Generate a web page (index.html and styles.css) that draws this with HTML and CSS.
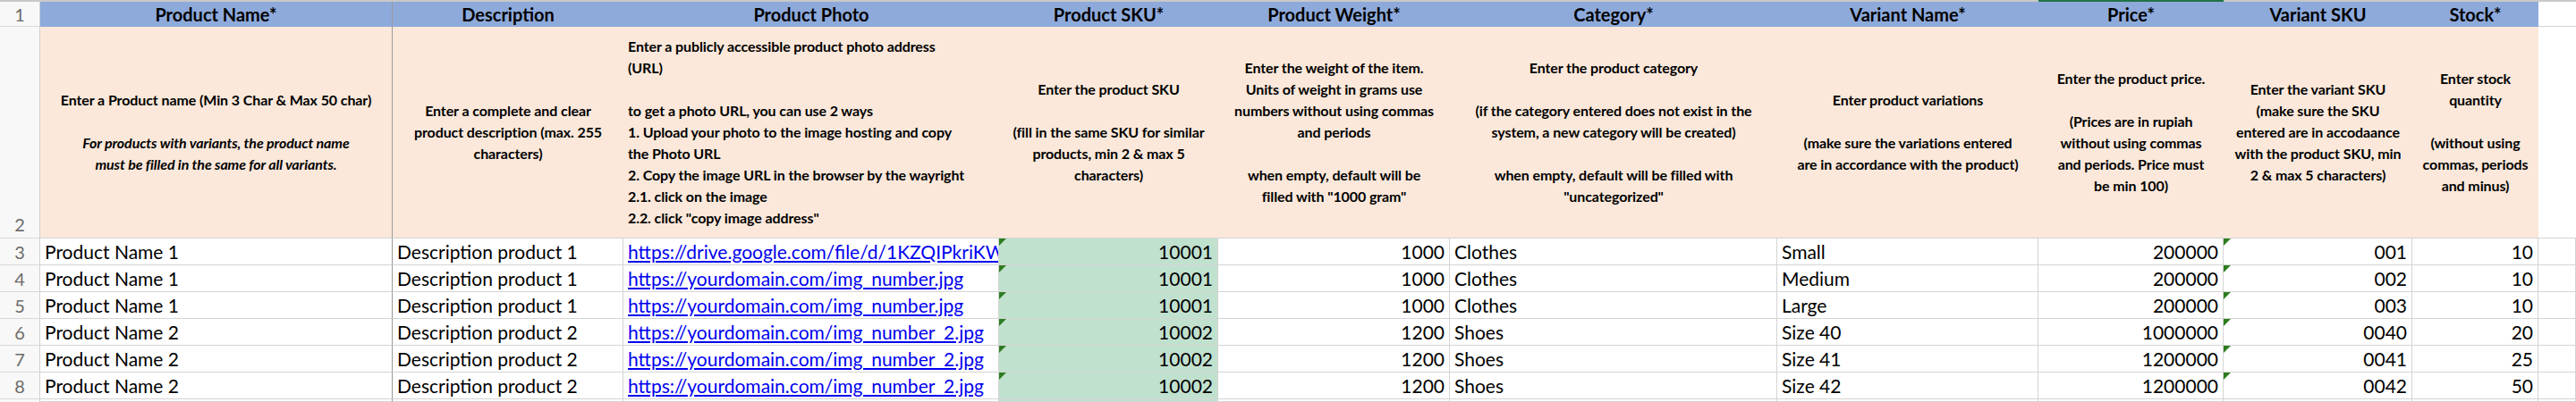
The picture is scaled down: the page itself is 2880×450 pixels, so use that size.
FILE: index.html
```html
<!DOCTYPE html>
<html lang="en">
<head>
<meta charset="utf-8">
<title>Product import template</title>
<link rel="stylesheet" href="styles.css">
</head>
<body>
<div class="sheet">
  <!-- column letter strip (cropped) -->
  <div class="strip"></div><div class="strip"></div><div class="strip"></div><div class="strip"></div>
  <div class="strip"></div><div class="strip"></div><div class="strip"></div><div class="strip"></div>
  <div class="strip sel"></div><div class="strip"></div><div class="strip"></div><div class="strip"></div>

  <!-- row 1 -->
  <div class="rh mid">1</div>
  <div class="hd name">Product Name*</div>
  <div class="hd">Description</div>
  <div class="hd">Product Photo</div>
  <div class="hd">Product SKU*</div>
  <div class="hd">Product Weight*</div>
  <div class="hd">Category*</div>
  <div class="hd">Variant Name*</div>
  <div class="hd">Price*</div>
  <div class="hd">Variant SKU</div>
  <div class="hd">Stock*</div>
  <div class="empty"></div>

  <!-- row 2 -->
  <div class="rh">2</div>
  <div class="ins name"><div class="txt">Enter a Product name (Min 3 Char &amp; Max 50 char)<br><br><em>For products with variants, the product name<br>must be filled in the same for all variants.</em></div></div>
  <div class="ins"><div class="txt">Enter a complete and clear<br>product description (max. 255<br>characters)</div></div>
  <div class="ins left"><div class="txt">Enter a publicly accessible product photo address<br>(URL)<br><br>to get a photo URL, you can use 2 ways<br>1. Upload your photo to the image hosting and copy<br>the Photo URL<br>2. Copy the image URL in the browser by the wayright<br>2.1. click on the image<br>2.2. click "copy image address"</div></div>
  <div class="ins"><div class="txt">Enter the product SKU<br><br>(fill in the same SKU for similar<br>products, min 2 &amp; max 5<br>characters)</div></div>
  <div class="ins"><div class="txt">Enter the weight of the item.<br>Units of weight in grams use<br>numbers without using commas<br>and periods<br><br>when empty, default will be<br>filled with "1000 gram"</div></div>
  <div class="ins"><div class="txt">Enter the product category<br><br>(if the category entered does not exist in the<br>system, a new category will be created)<br><br>when empty, default will be filled with<br>"uncategorized"</div></div>
  <div class="ins"><div class="txt">Enter product variations<br><br>(make sure the variations entered<br>are in accordance with the product)</div></div>
  <div class="ins"><div class="txt">Enter the product price.<br><br>(Prices are in rupiah<br>without using commas<br>and periods. Price must<br>be min 100)</div></div>
  <div class="ins"><div class="txt">Enter the variant SKU<br>(make sure the SKU<br>entered are in accodaance<br>with the product SKU, min<br>2 &amp; max 5 characters)</div></div>
  <div class="ins"><div class="txt">Enter stock<br>quantity<br><br>(without using<br>commas, periods<br>and minus)</div></div>
  <div class="empty"></div>

  <!-- data rows -->
  <div class="rh mid">3</div>
  <div class="td name">Product Name 1</div>
  <div class="td">Description product 1</div>
  <div class="td"><span class="link">https://drive.google.com/file/d/1KZQIPkriKW</span></div>
  <div class="td num sku flag">10001</div>
  <div class="td num">1000</div>
  <div class="td">Clothes</div>
  <div class="td">Small</div>
  <div class="td num">200000</div>
  <div class="td num flag">001</div>
  <div class="td num">10</div>
  <div class="td"></div>

  <div class="rh mid">4</div>
  <div class="td name">Product Name 1</div>
  <div class="td">Description product 1</div>
  <div class="td"><span class="link">https://yourdomain.com/img_number.jpg</span></div>
  <div class="td num sku flag">10001</div>
  <div class="td num">1000</div>
  <div class="td">Clothes</div>
  <div class="td">Medium</div>
  <div class="td num">200000</div>
  <div class="td num flag">002</div>
  <div class="td num">10</div>
  <div class="td"></div>

  <div class="rh mid">5</div>
  <div class="td name">Product Name 1</div>
  <div class="td">Description product 1</div>
  <div class="td"><span class="link">https://yourdomain.com/img_number.jpg</span></div>
  <div class="td num sku flag">10001</div>
  <div class="td num">1000</div>
  <div class="td">Clothes</div>
  <div class="td">Large</div>
  <div class="td num">200000</div>
  <div class="td num flag">003</div>
  <div class="td num">10</div>
  <div class="td"></div>

  <div class="rh mid">6</div>
  <div class="td name">Product Name 2</div>
  <div class="td">Description product 2</div>
  <div class="td"><span class="link">https://yourdomain.com/img_number_2.jpg</span></div>
  <div class="td num sku flag">10002</div>
  <div class="td num">1200</div>
  <div class="td">Shoes</div>
  <div class="td">Size 40</div>
  <div class="td num">1000000</div>
  <div class="td num flag">0040</div>
  <div class="td num">20</div>
  <div class="td"></div>

  <div class="rh mid">7</div>
  <div class="td name">Product Name 2</div>
  <div class="td">Description product 2</div>
  <div class="td"><span class="link">https://yourdomain.com/img_number_2.jpg</span></div>
  <div class="td num sku flag">10002</div>
  <div class="td num">1200</div>
  <div class="td">Shoes</div>
  <div class="td">Size 41</div>
  <div class="td num">1200000</div>
  <div class="td num flag">0041</div>
  <div class="td num">25</div>
  <div class="td"></div>

  <div class="rh mid">8</div>
  <div class="td name">Product Name 2</div>
  <div class="td">Description product 2</div>
  <div class="td"><span class="link">https://yourdomain.com/img_number_2.jpg</span></div>
  <div class="td num sku flag">10002</div>
  <div class="td num">1200</div>
  <div class="td">Shoes</div>
  <div class="td">Size 42</div>
  <div class="td num">1200000</div>
  <div class="td num flag">0042</div>
  <div class="td num">50</div>
  <div class="td"></div>

  <div class="rh"></div>
  <div class="td name"></div><div class="td"></div><div class="td"></div><div class="td sku"></div>
  <div class="td"></div><div class="td"></div><div class="td"></div><div class="td"></div>
  <div class="td"></div><div class="td"></div><div class="td"></div>
</div>
</body>
</html>
```

FILE: styles.css
```css
* { box-sizing: border-box; }

html, body {
  margin: 0;
  padding: 0;
  background: #ffffff;
}

body {
  font-family: "Lato", "Open Sans", "Liberation Sans", sans-serif;
  color: #000;
  width: 2880px;
  height: 450px;
  overflow: hidden;
}

.sheet {
  display: grid;
  grid-template-columns: 45px 394px 258px 420px 245px 259px 366px 292px 207px 211px 141px 42px;
  grid-template-rows: 2px 28px 237px repeat(6, 30px) 3px;
}

.strip {
  background: #c8c8c8;
}
.strip.sel {
  background: #217346;
}

.rh {
  background: #f8f8f8;
  color: #6b6b6b;
  font-size: 20px;
  border-right: 1px solid #cfcfcf;
  border-bottom: 1px solid #d9d9d9;
  display: flex;
  justify-content: center;
  align-items: flex-end;
  padding-bottom: 3px;
  line-height: 24px;
  overflow: hidden;
}
.rh.mid {
  align-items: center;
  padding-bottom: 0;
}

.hd {
  background: #8eaadb;
  font-weight: 700;
  font-size: 20px;
  display: flex;
  align-items: center;
  justify-content: center;
  white-space: nowrap;
  overflow: hidden;
}

.name {
  border-right: 1px solid #9a9a9a;
}

.empty {
  background: #fff;
  border-bottom: 1px solid #d4d4d4;
}

.ins {
  background: #fbe8da;
  font-weight: 700;
  font-size: 16px;
  line-height: 24px;
  letter-spacing: -0.1px;
  display: flex;
  align-items: center;
  justify-content: center;
  text-align: center;
  white-space: nowrap;
  padding: 0;
  border-bottom: 1px solid #d4d4d4;
}
.ins .txt {
  flex: 0 0 auto;
}
.ins.left {
  justify-content: flex-start;
  text-align: left;
  padding-left: 5px;
}
.ins em {
  font-style: italic;
}

.td {
  position: relative;
  font-size: 21px;
  line-height: 28px;
  padding: 0 5px;
  display: flex;
  align-items: center;
  white-space: nowrap;
  overflow: hidden;
  border-right: 1px solid #d4d4d4;
  border-bottom: 1px solid #d4d4d4;
}
.td.name {
  border-right: 1px solid #9a9a9a;
}
.td.num {
  justify-content: flex-end;
}
.td.sku {
  background: #c1e1cf;
}

.flag::before {
  content: "";
  position: absolute;
  top: 0;
  left: 0;
  border-top: 8px solid #2d7d1f;
  border-right: 8px solid transparent;
}

.link {
  color: #0000ee;
  text-decoration: underline;
}
```
